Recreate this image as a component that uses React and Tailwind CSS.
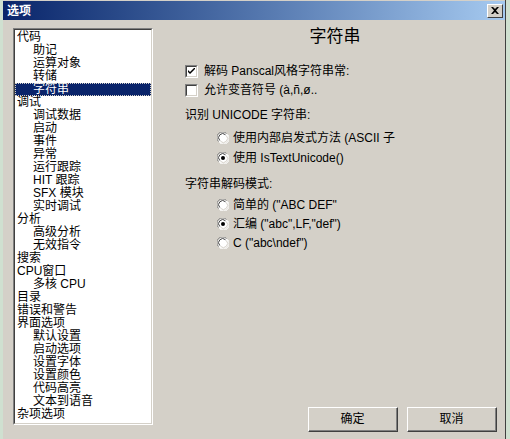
const font = { fontFamily: '"Liberation Sans", "Noto Sans CJK SC", sans-serif' };

const tree = [
  ["代码", 0],
  ["助记", 1],
  ["运算对象", 1],
  ["转储", 1],
  ["字符串", 1, true],
  ["调试", 0],
  ["调试数据", 1],
  ["启动", 1],
  ["事件", 1],
  ["异常", 1],
  ["运行跟踪", 1],
  ["HIT 跟踪", 1],
  ["SFX 模块", 1],
  ["实时调试", 1],
  ["分析", 0],
  ["高级分析", 1],
  ["无效指令", 1],
  ["搜索", 0],
  ["CPU窗口", 0],
  ["多核 CPU", 1],
  ["目录", 0],
  ["错误和警告", 0],
  ["界面选项", 0],
  ["默认设置", 1],
  ["启动选项", 1],
  ["设置字体", 1],
  ["设置颜色", 1],
  ["代码高亮", 1],
  ["文本到语音", 1],
  ["杂项选项", 0],
];

const Check = ({ on }) => (
  <span className="flex h-[13px] w-[13px] shrink-0 items-center justify-center border border-t-[#808080] border-l-[#808080] border-b-white border-r-white">
    <span className="flex h-[11px] w-[11px] items-center justify-center border border-t-[#404040] border-l-[#404040] border-b-[#d4d0c8] border-r-[#d4d0c8] bg-white">
      {on && (
        <svg width="7" height="7" viewBox="0 0 7 7">
          <path d="M0 2 L0 4 L2 6 L7 1 L7 -1 L2 4 Z" fill="#000" />
        </svg>
      )}
    </span>
  </span>
);

const Radio = ({ on }) => (
  <svg width="12" height="12" viewBox="0 0 12 12" className="shrink-0">
    <circle cx="6" cy="6" r="5.5" fill="#fff" />
    <path d="M10.5 2.5 A5.5 5.5 0 0 1 2.5 10.5" stroke="#fff" fill="none" />
    <path d="M1.5 9.5 A5.5 5.5 0 0 1 9.5 1.5" stroke="#808080" fill="none" />
    <path d="M2.8 8.5 A4 4 0 0 1 8.5 2.8" stroke="#404040" fill="none" />
    <path d="M9.3 3.5 A4 4 0 0 1 3.5 9.3" stroke="#d4d0c8" fill="none" />
    {on && <circle cx="6" cy="6" r="2" fill="#000" />}
  </svg>
);

const Btn = ({ children }) => (
  <button className="h-[25px] w-[90px] border border-t-white border-l-white border-b-[#404040] border-r-[#404040] bg-[#d4d0c8] text-[12px] text-black">
    <span className="flex h-full w-full items-center justify-center border-b border-r border-b-[#808080] border-r-[#808080]">
      {children}
    </span>
  </button>
);

export default function App() {
  return (
    <div className="flex h-[439px] w-[510px] overflow-hidden bg-[#cfe0d0] text-black" style={font}>
      <div className="ml-[3px] flex h-[439px] w-[503px] flex-col border-r border-r-[#404040] bg-[#d4d0c8]">
        {/* title bar */}
        <div className="mt-[1px] flex h-[19px] items-center justify-between bg-gradient-to-r from-[#0a246a] to-[#a6caf0] pl-[4px] pr-[2px]">
          <span className="text-[12px] font-bold text-white">选项</span>
          <span className="flex h-[14px] w-[16px] items-center justify-center border border-t-white border-l-white border-b-[#404040] border-r-[#404040] bg-[#d4d0c8]">
            <svg width="8" height="7" viewBox="0 0 8 7">
              <path d="M0 0 L2 0 L4 2 L6 0 L8 0 L5 3.5 L8 7 L6 7 L4 5 L2 7 L0 7 L3 3.5 Z" fill="#000" />
            </svg>
          </span>
        </div>

        <div className="flex flex-1">
          {/* tree */}
          <div className="ml-[10px] mt-[8px] h-[397px] w-[140px] border border-t-[#808080] border-l-[#808080] border-b-white border-r-white">
            <div className="h-full w-full border border-t-[#404040] border-l-[#404040] border-b-[#d4d0c8] border-r-[#d4d0c8] bg-white pt-[1px]">
              {tree.map(([t, lvl, sel]) => (
                <div
                  key={t}
                  className={
                    "flex h-[13px] items-center text-[12px] leading-[13px] whitespace-nowrap " +
                    (lvl ? "pl-[18px] " : "pl-[2px] ") +
                    (sel ? "bg-[#0a246a] text-white outline outline-1 outline-dotted outline-[#d4d0c8] -outline-offset-1" : "")
                  }
                >
                  {t}
                </div>
              ))}
            </div>
          </div>

          {/* right panel */}
          <div className="flex flex-1 flex-col pl-[32px] pr-[8px]">
            <div className="mt-[7px] pr-[12px] text-center text-[17px] leading-[20px]">字符串</div>

            <div className="mt-[15px] flex h-[18px] items-center gap-[6px]">
              <Check on />
              <span className="whitespace-nowrap text-[12px]">解码 Panscal风格字符串常:</span>
            </div>
            <div className="mt-[1px] flex h-[18px] items-center gap-[6px]">
              <Check />
              <span className="whitespace-nowrap text-[12px]">允许变音符号 (à,ñ,ø..</span>
            </div>

            <div className="mt-[8px] flex h-[16px] items-center text-[12px]">识别 UNICODE 字符串:</div>
            <div className="mt-[6px] flex h-[18px] items-center gap-[4px] pl-[32px]">
              <Radio />
              <span className="whitespace-nowrap text-[12px]">使用内部启发式方法 (ASCII 子</span>
            </div>
            <div className="mt-[2px] flex h-[18px] items-center gap-[4px] pl-[32px]">
              <Radio on />
              <span className="text-[12px]">使用 IsTextUnicode()</span>
            </div>

            <div className="mt-[9px] flex h-[16px] items-center text-[12px]">字符串解码模式:</div>
            <div className="mt-[4px] flex h-[18px] items-center gap-[4px] pl-[32px]">
              <Radio />
              <span className="whitespace-nowrap text-[12px]">简单的 ("ABC DEF"</span>
            </div>
            <div className="mt-[1px] flex h-[18px] items-center gap-[4px] pl-[32px]">
              <Radio on />
              <span className="text-[12px]">汇编 ("abc",LF,"def")</span>
            </div>
            <div className="mt-[1px] flex h-[18px] items-center gap-[4px] pl-[32px]">
              <Radio />
              <span className="text-[12px]">C ("abc\ndef")</span>
            </div>

            <div className="mt-auto mb-[7px] flex justify-end gap-[9px]">
              <Btn>确定</Btn>
              <Btn>取消</Btn>
            </div>
          </div>
        </div>
      </div>
    </div>
  );
}
